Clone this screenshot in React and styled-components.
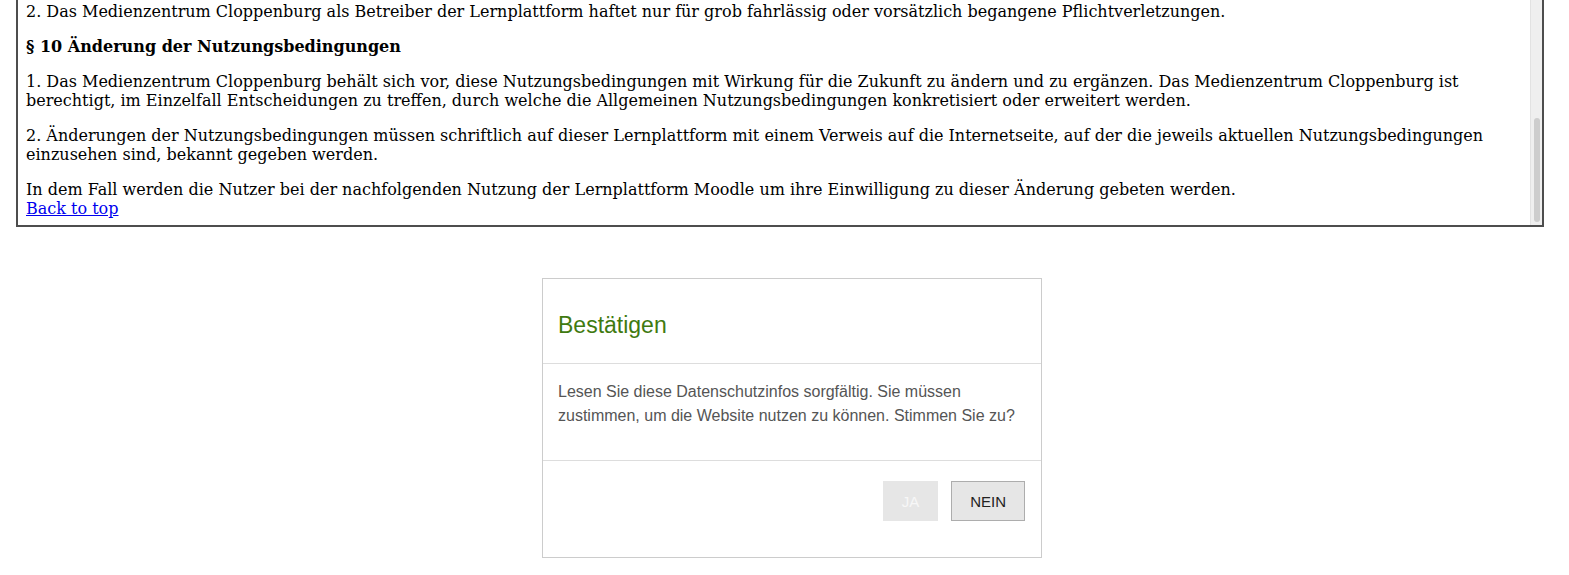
import { useEffect, useRef } from "react";
import styled, { createGlobalStyle } from "styled-components";

const GlobalStyle = createGlobalStyle`
  html, body {
    margin: 0;
    padding: 0;
    background: #fff;
  }
  body {
    font-family: "DejaVu Serif", serif;
  }
`;

const Page = styled.div`
  padding: 0 0 0 16px;
`;

const TermsBox = styled.div`
  display: flex;
  width: 1528px;
  height: 227px;
  box-sizing: border-box;
  border: 2px solid #4d4d4d;
  border-top: 0;
`;

const TermsText = styled.div`
  flex: 1;
  overflow: hidden;
  padding: 0 0 7px 8px;
  font-family: "DejaVu Serif", serif;
  font-size: 16px;
  color: #000;
`;

const ScrollTrack = styled.div`
  width: 12px;
  box-sizing: border-box;
  display: flex;
  flex-direction: column;
  justify-content: flex-end;
  padding: 0 2px 3px 3px;
  background: #efefef;
  border-left: 1px solid #e2e2e2;
`;

const ScrollThumb = styled.div`
  height: 104px;
  border-radius: 4px;
  background: #cdcdcd;
`;

const Para = styled.p`
  margin: 16px 0;
  line-height: 19px;
  &:last-of-type {
    margin-bottom: 0;
  }
`;

const BackLink = styled.a`
  display: block;
  line-height: 19px;
  color: #0000ee;
  text-decoration: underline;
`;

const Dialog = styled.div`
  width: 500px;
  box-sizing: border-box;
  margin: 51px 0 0 526px;
  border: 1px solid #cccccc;
  background: #fff;
  font-family: "Liberation Sans", Arial, sans-serif;
`;

const DialogHeader = styled.div`
  padding: 15px;
  border-bottom: 1px solid #dddddd;
`;

const DialogTitle = styled.h4`
  margin: 18px 0 10px;
  font-size: 23px;
  line-height: 26px;
  font-weight: 400;
  color: #3f7a10;
`;

const DialogBody = styled.div`
  padding: 16px 15px 32px;
  border-bottom: 1px solid #dddddd;
  font-size: 16px;
  line-height: 24px;
  color: #555555;
`;

const DialogFooter = styled.div`
  display: flex;
  justify-content: flex-end;
  gap: 13px;
  padding: 20px 16px 36px;
`;

const Button = styled.button`
  height: 40px;
  box-sizing: border-box;
  padding: 0 18px;
  font-family: "Liberation Sans", Arial, sans-serif;
  font-size: 15px;
  text-transform: uppercase;
  background: #e6e6e6;
  border: 1px solid ${(p) => (p.disabled ? "#e6e6e6" : "#adadad")};
  color: ${(p) => (p.disabled ? "#f7f7f7" : "#222222")};
  border-radius: 0;
  cursor: ${(p) => (p.disabled ? "default" : "pointer")};
`;

const terms = [
  { heading: "§ 8 Datenschutz" },
  {
    text: "1. Die Erhebung, Verarbeitung und Nutzung personenbezogener Daten erfolgt ausschließlich im Rahmen der geltenden datenschutzrechtlichen Bestimmungen und nur soweit dies für den Betrieb der Lernplattform erforderlich ist.",
  },
  { text: "2. Eine Weitergabe personenbezogener Daten an Dritte findet nicht statt." },
  { heading: "§ 9 Haftung" },
  {
    text: "1. Das Medienzentrum Cloppenburg übernimmt keine Gewähr für die ständige Verfügbarkeit der Lernplattform sowie für die Richtigkeit und Vollständigkeit der von Nutzern eingestellten Inhalte.",
  },
  {
    text: "2. Das Medienzentrum Cloppenburg als Betreiber der Lernplattform haftet nur für grob fahrlässig oder vorsätzlich begangene Pflichtverletzungen.",
  },
  { heading: "§ 10 Änderung der Nutzungsbedingungen" },
  {
    text: "1. Das Medienzentrum Cloppenburg behält sich vor, diese Nutzungsbedingungen mit Wirkung für die Zukunft zu ändern und zu ergänzen. Das Medienzentrum Cloppenburg ist berechtigt, im Einzelfall Entscheidungen zu treffen, durch welche die Allgemeinen Nutzungsbedingungen konkretisiert oder erweitert werden.",
  },
  {
    text: "2. Änderungen der Nutzungsbedingungen müssen schriftlich auf dieser Lernplattform mit einem Verweis auf die Internetseite, auf der die jeweils aktuellen Nutzungsbedingungen einzusehen sind, bekannt gegeben werden.",
  },
  {
    text: "In dem Fall werden die Nutzer bei der nachfolgenden Nutzung der Lernplattform Moodle um ihre Einwilligung zu dieser Änderung gebeten werden.",
  },
];

export default function App() {
  const textRef = useRef(null);

  useEffect(() => {
    // policy text is shown scrolled to its end
    if (textRef.current) {
      textRef.current.scrollTop = textRef.current.scrollHeight;
    }
  }, []);

  return (
    <Page>
      <GlobalStyle />
      <TermsBox>
        <TermsText ref={textRef}>
          {terms.map((item, i) =>
            item.heading ? (
              <Para key={i}>
                <strong>{item.heading}</strong>
              </Para>
            ) : (
              <Para key={i}>{item.text}</Para>
            )
          )}
          <BackLink href="#top">Back to top</BackLink>
        </TermsText>
        <ScrollTrack>
          <ScrollThumb />
        </ScrollTrack>
      </TermsBox>

      <Dialog role="dialog">
        <DialogHeader>
          <DialogTitle>Bestätigen</DialogTitle>
        </DialogHeader>
        <DialogBody>
          Lesen Sie diese Datenschutzinfos sorgfältig. Sie müssen
          <br />
          zustimmen, um die Website nutzen zu können. Stimmen Sie zu?
        </DialogBody>
        <DialogFooter>
          <Button disabled>Ja</Button>
          <Button>Nein</Button>
        </DialogFooter>
      </Dialog>
    </Page>
  );
}
